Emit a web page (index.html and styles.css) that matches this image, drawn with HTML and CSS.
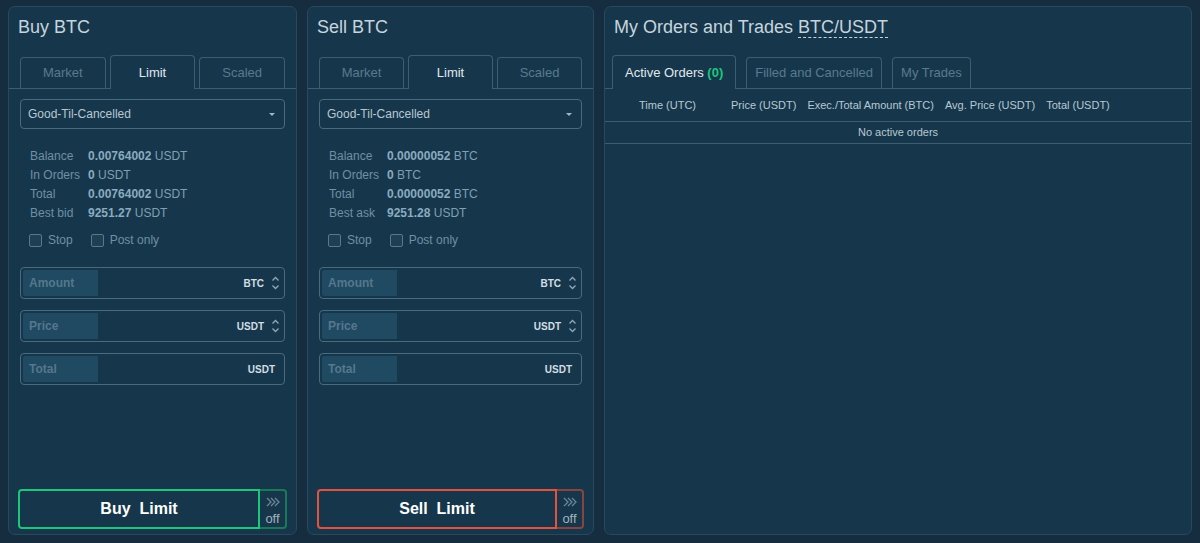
FILE: index.html
```html
<!DOCTYPE html>
<html lang="en">
<head>
    <meta charset="UTF-8">
    <title>BTC/USDT - Trade</title>
    <link rel="stylesheet" href="styles.css">
</head>
<body>

<div class="layout">

    <!-- Buy form -->
    <div class="panel">
        <h2 class="panel-title">Buy BTC</h2>
        <div class="tabs">
            <div class="tab">Market</div>
            <div class="tab active">Limit</div>
            <div class="tab">Scaled</div>
        </div>
        <div class="form">
            <div class="select">Good-Til-Cancelled <span class="caret"></span></div>

            <div class="balances">
                <div class="bal-row"><span class="bal-label">Balance</span><span><b>0.00764002</b> USDT</span></div>
                <div class="bal-row"><span class="bal-label">In Orders</span><span><b>0</b> USDT</span></div>
                <div class="bal-row"><span class="bal-label">Total</span><span><b>0.00764002</b> USDT</span></div>
                <div class="bal-row"><span class="bal-label">Best bid</span><span><b>9251.27</b> USDT</span></div>
            </div>

            <div class="checks">
                <label class="check"><span class="box"></span>Stop</label>
                <label class="check"><span class="box"></span>Post only</label>
            </div>

            <div class="field">
                <span class="field-label">Amount</span>
                <span class="unit">BTC</span>
                <svg class="spin" width="9" height="16" viewBox="0 0 9 16"><polyline points="1.5,5.5 4.5,2.5 7.5,5.5"/><polyline points="1.5,10.5 4.5,13.5 7.5,10.5"/></svg>
            </div>
            <div class="field">
                <span class="field-label">Price</span>
                <span class="unit">USDT</span>
                <svg class="spin" width="9" height="16" viewBox="0 0 9 16"><polyline points="1.5,5.5 4.5,2.5 7.5,5.5"/><polyline points="1.5,10.5 4.5,13.5 7.5,10.5"/></svg>
            </div>
            <div class="field">
                <span class="field-label">Total</span>
                <span class="unit unit-last">USDT</span>
            </div>
        </div>

        <div class="submit buy">
            <button class="submit-btn">Buy&nbsp; Limit</button>
            <div class="submit-off">
                <svg width="14" height="10" viewBox="0 0 14 10"><polyline points="1,1 5,5 1,9"/><polyline points="5,1 9,5 5,9"/><polyline points="9,1 13,5 9,9"/></svg>
                <span>off</span>
            </div>
        </div>
    </div>

    <!-- Sell form -->
    <div class="panel">
        <h2 class="panel-title">Sell BTC</h2>
        <div class="tabs">
            <div class="tab">Market</div>
            <div class="tab active">Limit</div>
            <div class="tab">Scaled</div>
        </div>
        <div class="form">
            <div class="select">Good-Til-Cancelled <span class="caret"></span></div>

            <div class="balances">
                <div class="bal-row"><span class="bal-label">Balance</span><span><b>0.00000052</b> BTC</span></div>
                <div class="bal-row"><span class="bal-label">In Orders</span><span><b>0</b> BTC</span></div>
                <div class="bal-row"><span class="bal-label">Total</span><span><b>0.00000052</b> BTC</span></div>
                <div class="bal-row"><span class="bal-label">Best ask</span><span><b>9251.28</b> USDT</span></div>
            </div>

            <div class="checks">
                <label class="check"><span class="box"></span>Stop</label>
                <label class="check"><span class="box"></span>Post only</label>
            </div>

            <div class="field">
                <span class="field-label">Amount</span>
                <span class="unit">BTC</span>
                <svg class="spin" width="9" height="16" viewBox="0 0 9 16"><polyline points="1.5,5.5 4.5,2.5 7.5,5.5"/><polyline points="1.5,10.5 4.5,13.5 7.5,10.5"/></svg>
            </div>
            <div class="field">
                <span class="field-label">Price</span>
                <span class="unit">USDT</span>
                <svg class="spin" width="9" height="16" viewBox="0 0 9 16"><polyline points="1.5,5.5 4.5,2.5 7.5,5.5"/><polyline points="1.5,10.5 4.5,13.5 7.5,10.5"/></svg>
            </div>
            <div class="field">
                <span class="field-label">Total</span>
                <span class="unit unit-last">USDT</span>
            </div>
        </div>

        <div class="submit sell">
            <button class="submit-btn">Sell&nbsp; Limit</button>
            <div class="submit-off">
                <svg width="14" height="10" viewBox="0 0 14 10"><polyline points="1,1 5,5 1,9"/><polyline points="5,1 9,5 5,9"/><polyline points="9,1 13,5 9,9"/></svg>
                <span>off</span>
            </div>
        </div>
    </div>

    <!-- Orders -->
    <div class="panel orders">
        <h2 class="panel-title">My Orders and Trades <span class="pair">BTC/USDT</span></h2>
        <div class="tabs orders-tabs">
            <div class="tab active">Active Orders <b class="count">(0)</b></div>
            <div class="tab">Filled and Cancelled</div>
            <div class="tab">My Trades</div>
        </div>
        <div class="orders-head">
            <span class="col-time">Time (UTC)</span>
            <span>Price (USDT)</span>
            <span>Exec./Total Amount (BTC)</span>
            <span>Avg. Price (USDT)</span>
            <span>Total (USDT)</span>
        </div>
        <div class="orders-empty">No active orders</div>
    </div>

</div>

</body>
</html>
```

FILE: styles.css
```css
body {
    margin: 0;
    background: #152d3f;
    font-family: "Liberation Sans", Arial, sans-serif;
    color: #7f9fb3;
}

.layout {
    display: grid;
    grid-template-columns: 289px 287px 1fr;
    column-gap: 10px;
    padding: 6px 8px 8px 8px;
    height: 529px;
}

.panel {
    background: #16374b;
    border: 1px solid #28495d;
    border-radius: 7px;
    display: flex;
    flex-direction: column;
}

.panel-title {
    margin: 9px 0 0 9px;
    font-size: 18px;
    font-weight: normal;
    line-height: 22px;
    color: #c6d4de;
}

.pair {
    border-bottom: 1px dashed #c6d4de;
}

/* tabs */
.tabs {
    display: flex;
    align-items: flex-end;
    gap: 4px;
    height: 33px;
    margin-top: 17px;
    padding: 0 11px;
    border-bottom: 1px solid #3c5d72;
}

.tab {
    flex: 1;
    height: 30px;
    line-height: 30px;
    text-align: center;
    font-size: 13px;
    color: #587a90;
    border: 1px solid #3c5d72;
    border-bottom: none;
    border-radius: 4px 4px 0 0;
}

.tab.active {
    height: 33px;
    line-height: 34px;
    color: #e0e8ee;
    background: #16374b;
    margin-bottom: -1px;
}

/* form */
.form {
    padding: 10px 11px 0 11px;
}

.select {
    position: relative;
    height: 28px;
    line-height: 29px;
    border: 1px solid #4a6a7f;
    border-radius: 4px;
    padding-left: 7px;
    font-size: 12px;
    color: #b8c8d3;
}

.caret {
    position: absolute;
    right: 9px;
    top: 13px;
    border-left: 3px solid transparent;
    border-right: 3px solid transparent;
    border-top: 3px solid #a4b6c3;
}

.balances {
    margin-top: 18px;
    padding-left: 10px;
}

.bal-row {
    display: flex;
    font-size: 12px;
    line-height: 19px;
    color: #7f9fb3;
}

.bal-label {
    width: 58px;
    color: #6f90a5;
}

.bal-row b {
    color: #8aabc0;
}

.checks {
    display: flex;
    gap: 18px;
    margin-top: 8px;
    padding-left: 9px;
    height: 18px;
    align-items: center;
}

.check {
    display: flex;
    align-items: center;
    gap: 6px;
    font-size: 12px;
    color: #6f90a5;
}

.box {
    width: 11px;
    height: 11px;
    border: 1px solid #5b788b;
    border-radius: 2px;
    background: #1d4054;
}

.field {
    display: flex;
    align-items: center;
    margin-top: 11px;
    border: 1px solid #4a6a7f;
    border-radius: 4px;
    padding: 2px;
    height: 26px;
}

.checks + .field {
    margin-top: 18px;
}

.field-label {
    width: 69px;
    height: 26px;
    line-height: 27px;
    padding-left: 6px;
    background: #1f4a62;
    border-radius: 2px 0 0 2px;
    font-size: 12px;
    font-weight: bold;
    color: #56778c;
}

.unit {
    margin-left: auto;
    font-size: 10px;
    font-weight: bold;
    color: #d2dde4;
}

.unit-last {
    margin-right: 7px;
}

.spin {
    margin: 0 2px 0 7px;
    fill: none;
    stroke: #8fa8b8;
    stroke-width: 1.3;
}

/* submit */
.submit {
    display: flex;
    margin: auto 9px 5px 9px;
    height: 40px;
}

.submit-btn {
    flex: 1;
    background: #16374b;
    border: 2px solid;
    border-radius: 4px 0 0 4px;
    font-family: "Liberation Sans", Arial, sans-serif;
    font-size: 16px;
    font-weight: bold;
    color: #ffffff;
    cursor: pointer;
}

.submit-off {
    width: 25px;
    border: 2px solid;
    border-left: none;
    border-radius: 0 4px 4px 0;
    display: flex;
    flex-direction: column;
    align-items: center;
    font-size: 13px;
    color: #a3b2bc;
}

.submit-off svg {
    margin-top: 6px;
    fill: none;
    stroke: #6c8494;
    stroke-width: 1.3;
}

.submit-off span {
    margin-top: 4px;
}

.buy .submit-btn { border-color: #1ec67c; }
.buy .submit-off { border-color: #1a7a58; }
.sell .submit-btn { border-color: #e2533f; }
.sell .submit-off { border-color: #8a4440; }

/* orders */
.orders-tabs {
    justify-content: flex-start;
    gap: 10px;
    padding: 0 7px;
}

.orders-tabs .tab {
    flex: none;
    padding: 0 8px;
}

.orders-tabs .tab.active {
    padding: 0 12px;
}

.count {
    color: #1ec67c;
}

.orders-head {
    display: flex;
    gap: 11px;
    padding-left: 34px;
    height: 32px;
    line-height: 32px;
    font-size: 11px;
    color: #b8c8d3;
    border-bottom: 1px solid #3c5d72;
}

.col-time {
    width: 81px;
}

.orders-empty {
    height: 21px;
    line-height: 21px;
    text-align: center;
    font-size: 11px;
    color: #b8c8d3;
    border-bottom: 1px solid #3c5d72;
}
```
